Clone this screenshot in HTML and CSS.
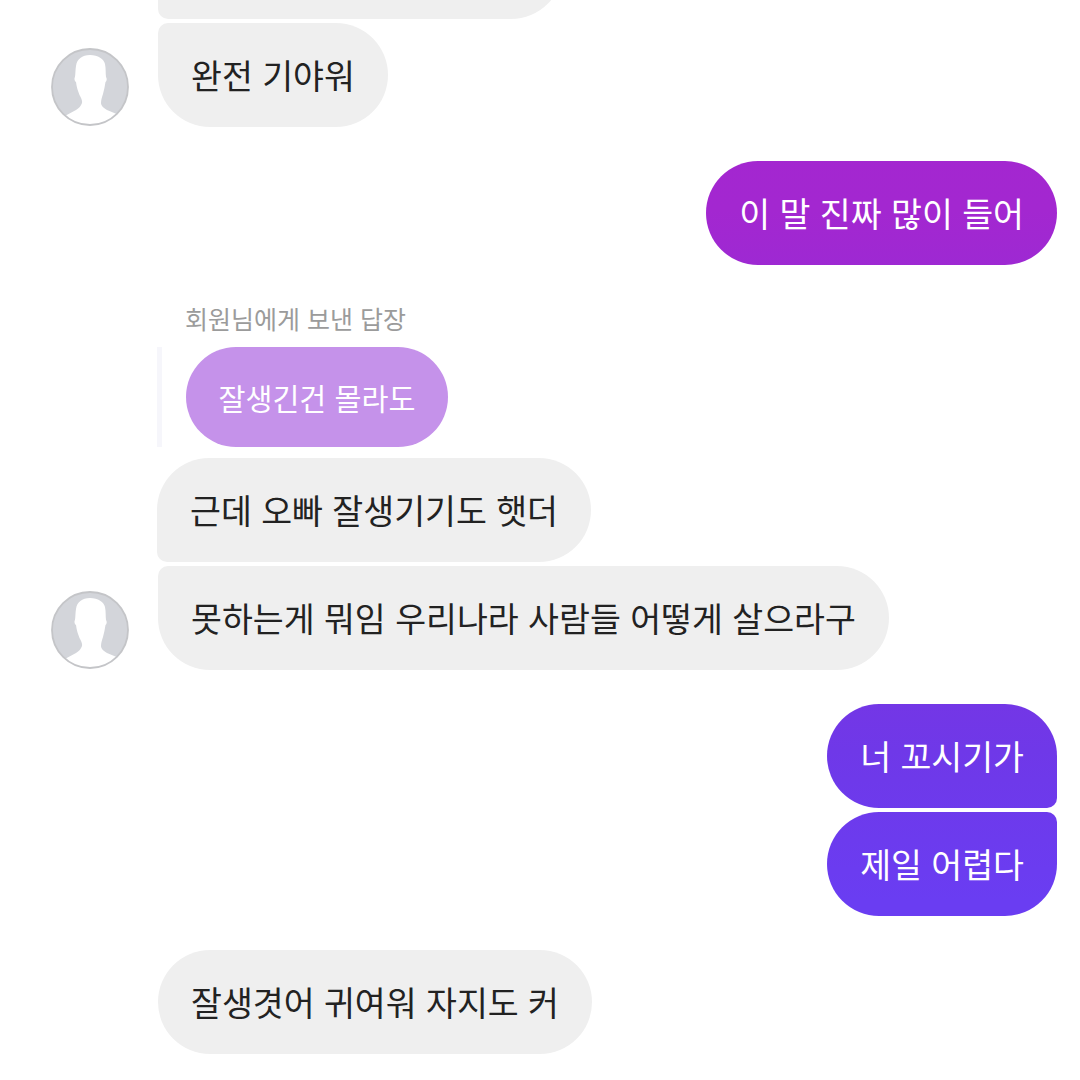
FILE: index.html
```html
<!DOCTYPE html>
<html lang="ko">
<head>
<meta charset="utf-8">
<title>메시지</title>
<link rel="stylesheet" href="styles.css">
</head>
<body>
<svg class="sprite" width="0" height="0" aria-hidden="true">
  <symbol id="default-avatar" viewBox="0 0 78 78">
    <clipPath id="avatar-clip"><circle cx="39" cy="39" r="38"/></clipPath>
    <circle cx="39" cy="39" r="38" fill="#d3d5da"/>
    <path clip-path="url(#avatar-clip)" fill="#fff" d="M39 7C31 7 26 11 25 18C24.300 22 24.500 26 24 29C23 30 23.500 33 25 34C25.500 39 27 43 28.500 47C30 50 31.500 52 31 55C30 58 28 60 25 62L12 69L12 78L68 78L68 67L56 62C53 60 50 58 50 55C50 52 51 49 52 46C53 42 54 38 54.500 34C56 33 56 30 55 29C54.500 25 55 21 54 16C53 11 47 7 39 7Z"/>
    <circle cx="39" cy="39" r="38" fill="none" stroke="#c4c5c8" stroke-width="1.800"/>
  </symbol>
</svg>
<main class="thread">
  <div class="row in scrolled-off">
    <span class="slot"></span>
    <div class="bubble peer earlier"></div>
  </div>
  <div class="row in tight">
    <span class="slot"><svg class="avatar"><use href="#default-avatar"/></svg></span>
    <div class="bubble peer tail-top">완전 기야워</div>
  </div>

  <div class="row out gap-34">
    <div class="bubble mine">이 말 진짜 많이 들어</div>
  </div>

  <div class="reply-block">
    <div class="reply-label">회원님에게 보낸 답장</div>
    <div class="reply-quote">
      <span class="reply-bar"></span>
      <div class="reply-bubble">잘생긴건 몰라도</div>
    </div>
  </div>

  <div class="row in after-reply">
    <span class="slot"></span>
    <div class="bubble peer tail-bottom">근데 오빠 잘생기기도 햇더</div>
  </div>
  <div class="row in tight">
    <span class="slot"><svg class="avatar"><use href="#default-avatar"/></svg></span>
    <div class="bubble peer tail-top">못하는게 뭐임 우리나라 사람들 어떻게 살으라구</div>
  </div>

  <div class="row out gap-34">
    <div class="bubble mine tail-bottom-right">너 꼬시기가</div>
  </div>
  <div class="row out tight">
    <div class="bubble mine tail-top-right">제일 어렵다</div>
  </div>

  <div class="row in gap-34">
    <span class="slot"></span>
    <div class="bubble peer">잘생겻어 귀여워 자지도 커</div>
  </div>
</main>
</body>
</html>
```
FILE: styles.css
```css
* {
  box-sizing: border-box;
}

html,
body {
  margin: 0;
  height: 100%;
  background: #fff;
}

body {
  overflow: hidden;
  font-family: "Noto Sans CJK KR", "Noto Sans", sans-serif;
}

.sprite {
  display: block;
  height: 0;
}

.thread {
  display: flex;
  flex-direction: column;
  padding-right: 23px;
}

.row {
  display: flex;
  align-items: flex-end;
}

.row.in {
  padding-left: 51px;
  gap: 29px;
}

.row.out {
  justify-content: flex-end;
}

/* the thread is scrolled, so the earlier message sits partly above the top edge */
.scrolled-off {
  margin-top: -85px;
}

.tight {
  margin-top: 4px;
}

.gap-34 {
  margin-top: 34px;
}

.slot {
  flex: 0 0 78px;
}

.avatar {
  display: block;
  width: 78px;
  height: 78px;
  margin-bottom: 1px;
}

.bubble {
  height: 104px;
  padding: 0 33px;
  display: flex;
  align-items: center;
  border-radius: 52px;
  font-size: 33.6px;
  line-height: 48px;
  white-space: nowrap;
}

.peer {
  background: #efefef;
  color: #222;
}

.mine {
  color: #fff;
  background: linear-gradient(180deg, #a526d0 0, #a327d0 210px, #6f38e8 750px, #6a3df2 900px) fixed;
}

.earlier {
  width: 405px;
  border-bottom-left-radius: 10px;
}

.tail-top {
  border-top-left-radius: 10px;
}

.tail-bottom {
  border-bottom-left-radius: 10px;
}

.tail-bottom-right {
  border-bottom-right-radius: 10px;
}

.tail-top-right {
  border-top-right-radius: 10px;
}

.reply-block {
  margin: 36px 0 0 157px;
}

.reply-label {
  margin-left: 28px;
  font-size: 25px;
  line-height: 34px;
  color: #9b9b9b;
}

.reply-quote {
  display: flex;
  gap: 24px;
  margin-top: 12px;
}

.reply-bar {
  flex: 0 0 5px;
  background: #f6f6fb;
}

.reply-bubble {
  height: 100px;
  padding: 0 32.500px;
  display: flex;
  align-items: center;
  border-radius: 50px;
  background: #c592ea;
  color: #fff;
  font-size: 29.300px;
  line-height: 42px;
  white-space: nowrap;
}

.row.after-reply {
  margin-top: 11px;
}

.after-reply .bubble {
  margin-left: -1px;
}
```
